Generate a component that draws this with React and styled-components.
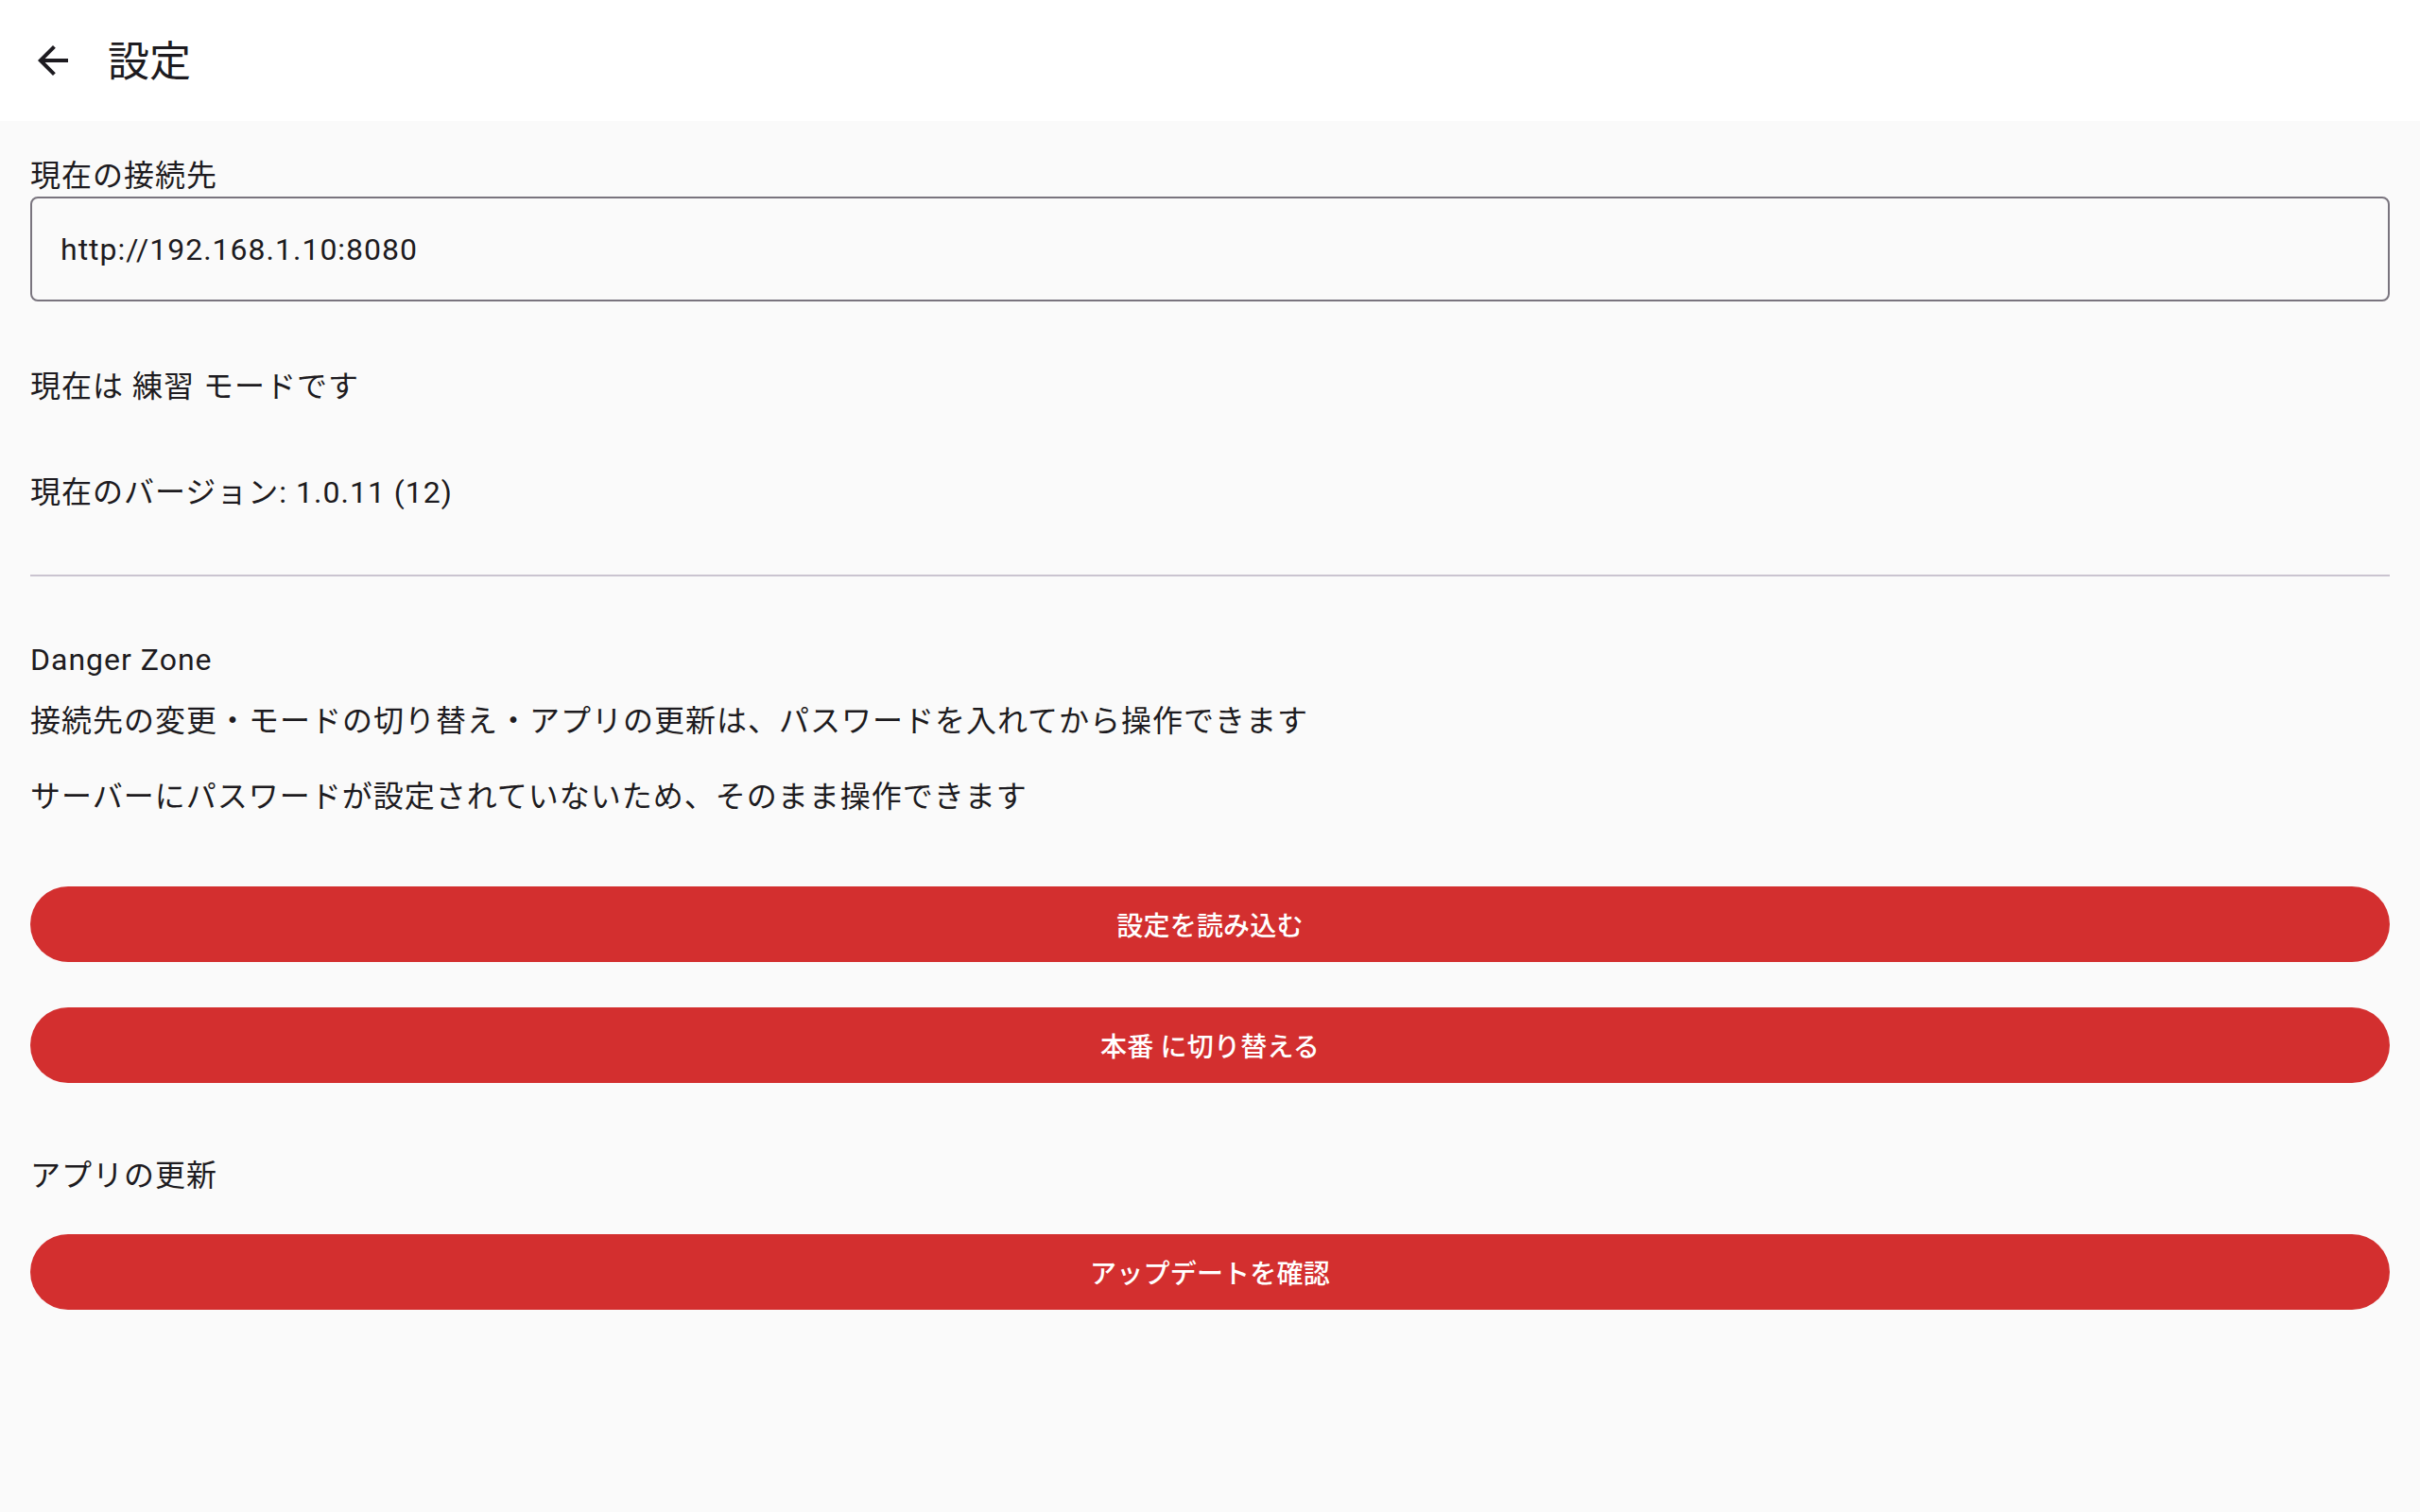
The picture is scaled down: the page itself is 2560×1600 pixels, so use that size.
import React from "react";
import styled, { createGlobalStyle } from "styled-components";

const GlobalStyle = createGlobalStyle`
    html, body {
        margin: 0;
        padding: 0;
        background: #fafafa;
    }
    body {
        font-family: Roboto, "Noto Sans CJK JP", sans-serif;
        color: #1d1b20;
    }
`;

function BackIcon() {
    return (
        <svg width="48" height="48" viewBox="0 0 24 24" fill="#1d1b20">
            <path d="M20 11H7.83l5.59-5.59L12 4l-8 8 8 8 1.41-1.41L7.83 13H20v-2z" />
        </svg>
    );
}

function App() {
    return (
        <>
            <GlobalStyle />
            <Page>
                <AppBar>
                    <BackButton aria-label="戻る">
                        <BackIcon />
                    </BackButton>
                    <Title>設定</Title>
                </AppBar>
                <Content>
                    <Text $top={38}>現在の接続先</Text>
                    <Field>http://192.168.1.10:8080</Field>
                    <Text $top={70}>現在は 練習 モードです</Text>
                    <Text $top={72}>現在のバージョン: 1.0.11 (12)</Text>
                    <Divider />
                    <Text $top={68}>Danger Zone</Text>
                    <Text $top={25}>接続先の変更・モードの切り替え・アプリの更新は、パスワードを入れてから操作できます</Text>
                    <Text $top={40}>サーバーにパスワードが設定されていないため、そのまま操作できます</Text>
                    <DangerButton $top={75}>設定を読み込む</DangerButton>
                    <DangerButton $top={48}>本番 に切り替える</DangerButton>
                    <Text $top={78}>アプリの更新</Text>
                    <DangerButton $top={42}>アップデートを確認</DangerButton>
                </Content>
            </Page>
        </>
    );
}

export default App;

const Page = styled.div`
    min-height: 1600px;
    background: #fafafa;
`;

const AppBar = styled.header`
    height: 128px;
    background: #ffffff;
    display: flex;
    align-items: center;
    padding-left: 32px;
`;

const BackButton = styled.button`
    width: 48px;
    height: 48px;
    padding: 0;
    border: none;
    background: transparent;
    display: flex;
    align-items: center;
    justify-content: center;
    cursor: pointer;
`;

const Title = styled.h1`
    margin: 4px 0 0 34px;
    font-size: 44px;
    font-weight: 400;
    line-height: 56px;
    color: #1d1b20;
`;

const Content = styled.main`
    padding: 0 32px;
    display: flex;
    flex-direction: column;
`;

const Text = styled.div`
    margin-top: ${(p) => p.$top}px;
    font-size: 32px;
    line-height: 40px;
    letter-spacing: 1px;
    color: #1d1b20;
    white-space: pre;
`;

const Field = styled.div`
    margin-top: 2px;
    height: 111px;
    box-sizing: border-box;
    border: 2px solid #79747e;
    border-radius: 8px;
    padding: 0 30px;
    display: flex;
    align-items: center;
    font-size: 32px;
    letter-spacing: 1px;
    color: #1d1b20;
`;

const Divider = styled.hr`
    margin: 67px 0 0;
    height: 2px;
    border: none;
    background: #cac4d0;
`;

const DangerButton = styled.button`
    margin-top: ${(p) => p.$top}px;
    height: 80px;
    width: 100%;
    border: none;
    border-radius: 40px;
    background: #d32f2f;
    color: #ffffff;
    font-family: Roboto, "Noto Sans CJK JP", sans-serif;
    font-size: 28px;
    font-weight: 500;
    letter-spacing: 0.2px;
    cursor: pointer;
`;
